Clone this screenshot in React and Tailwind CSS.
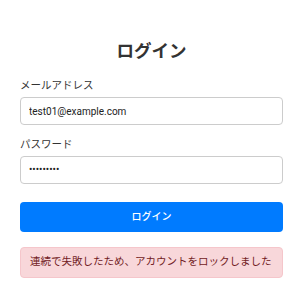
export default function App() {
  return (
    <div
      className="w-[300px] h-[300px] bg-white text-[#333]"
      style={{ fontFamily: 'Roboto, "Noto Sans CJK JP", sans-serif' }}
    >
      <div className="ml-5 w-[263px] pt-[39px] flex flex-col">
        <h1 className="text-center text-[17.5px] leading-[24px] font-bold text-[#333]">ログイン</h1>

        <label className="mt-4 text-[10.5px] leading-[14px] text-[#333]">メールアドレス</label>
        <input
          type="email"
          readOnly
          value="test01@example.com"
          className="mt-1 h-[28px] px-2 text-[10px] border border-[#ccc] rounded-[4px] text-[#222] outline-none"
        />

        <label className="mt-[12.5px] text-[10.5px] leading-[14px] text-[#333]">パスワード</label>
        <input
          type="password"
          readOnly
          value="password1"
          className="mt-1 h-[28px] px-2 text-[10px] border border-[#ccc] rounded-[4px] text-[#222] outline-none"
        />

        <button className="mt-[18px] h-[30px] bg-[#007bff] text-white text-[10px] font-medium rounded-[4px]">
          ログイン
        </button>

        <div className="mt-[15px] h-[31px] flex items-center px-[9px] bg-[#f8d7da] text-[#721c24] text-[10.5px] rounded-[4px] border border-[#f5c6cb]">
          連続で失敗したため、アカウントをロックしました
        </div>
      </div>
    </div>
  );
}
